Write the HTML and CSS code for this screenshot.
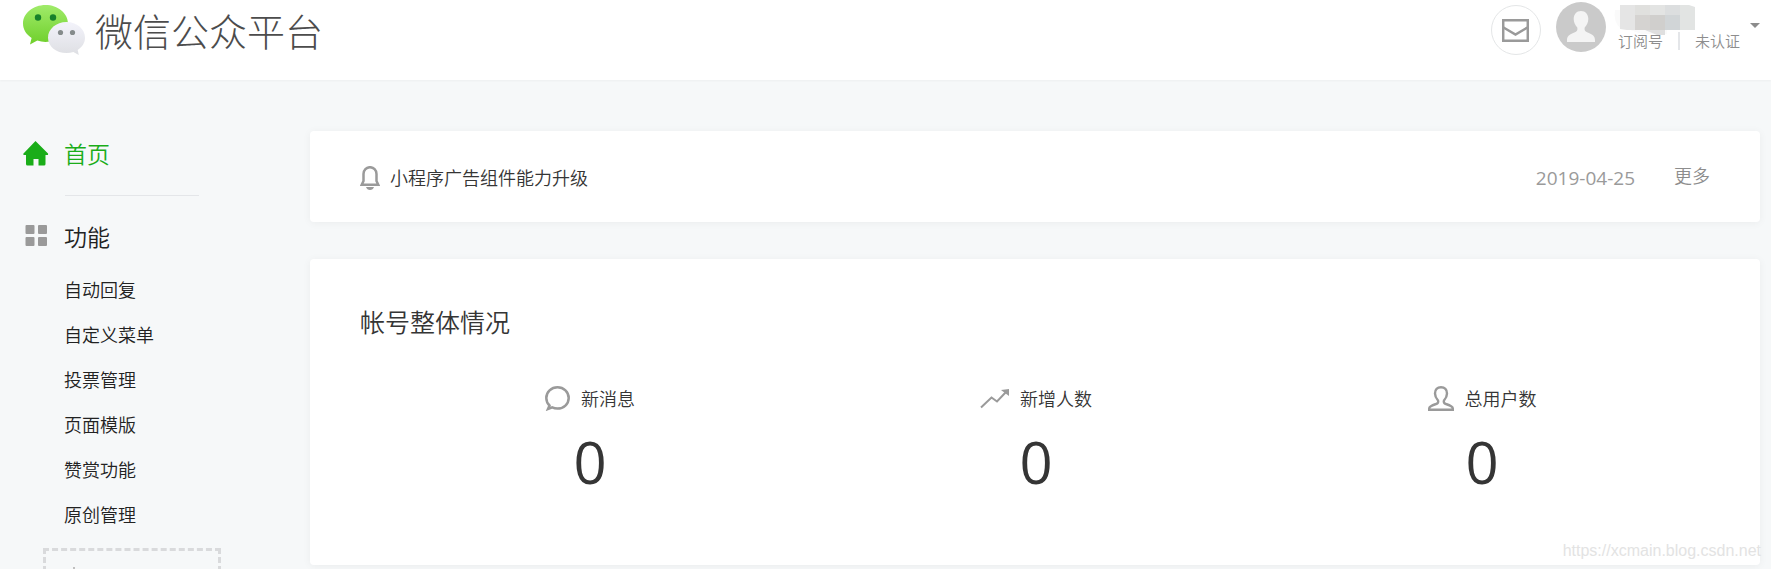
FILE: index.html
```html
<!DOCTYPE html>
<html lang="zh-CN">
<head>
    <meta charset="UTF-8">
    <meta name="viewport" content="width=device-width, initial-scale=1.0">
    <title>微信公众平台</title>
    <link rel="stylesheet" href="styles.css">
</head>
<body>
    <header class="header">
        <a class="logo" href="#">
            <svg class="logo-icon" width="62" height="50" viewBox="0 0 62 50">
                <defs>
                    <linearGradient id="green" x1="0" y1="0" x2="0" y2="1">
                        <stop offset="0" stop-color="#a0eb6a"/>
                        <stop offset="1" stop-color="#6fcf2b"/>
                    </linearGradient>
                    <linearGradient id="silver" x1="0" y1="0" x2="0" y2="1">
                        <stop offset="0" stop-color="#f3f3fb"/>
                        <stop offset="1" stop-color="#dedfe3"/>
                    </linearGradient>
                </defs>
                <path fill="url(#green)" d="M22.500 0C10 0 0 8.300 0 18.600c0 6 3.300 10.900 8.600 14.400L7 39.500l7.300-3.900c2.600.9 5.300 1.400 8.200 1.400 12.500 0 22.500-8 22.500-18.400S35 0 22.500 0z"/>
                <path fill="url(#silver)" d="M43.500 17C33.300 17 25 24 25 32.700s8.300 15.300 18.500 15.300c2.400 0 4.800-.3 6.900-1l5.400 3-1.100-5c4.400-3 7.300-7.200 7.300-12.300C62 24 53.700 17 43.500 17z"/>
                <circle cx="15" cy="12.500" r="3.200" fill="#17812b"/>
                <circle cx="30" cy="12.500" r="3.200" fill="#17812b"/>
                <circle cx="37.500" cy="27.500" r="2.600" fill="#858b8b"/>
                <circle cx="49.500" cy="27.500" r="2.600" fill="#858b8b"/>
            </svg>
            <span class="logo-text">微信公众平台</span>
        </a>
        <div class="account">
            <button class="mail" type="button" aria-label="通知">
                <svg width="27" height="23" viewBox="0 0 27 23" fill="none" stroke="#9a9a9a" stroke-width="2.500">
                    <path d="M1.200 1.200h24.600v20.600H1.200z"/>
                    <path d="M1.500 8.500L13.500 15.500L25.500 8.500"/>
                </svg>
            </button>
            <svg class="avatar" width="50" height="50" viewBox="0 0 50 50">
                <circle cx="25" cy="25" r="25" fill="#cacaca"/>
                <path fill="#f4f4f4" d="M25 9c-4.500 0-7.300 3.500-7.300 8 0 3.600 1.600 6.500 3.600 8.400.6 2.600-.4 4-3 5.200C13.500 32.500 11 34.500 11 38v2h28v-2c0-3.500-2.500-5.500-7.300-7.400-2.600-1.200-3.600-2.600-3-5.200 2-1.900 3.600-4.800 3.600-8.400 0-4.500-2.800-8-7.300-8z"/>
            </svg>
            <div class="account-info">
                <svg class="account-name" width="85" height="30" viewBox="-2 0 85 30">
                    <path fill="#fafafa" d="M2 5Q0 16 7 23l10 2 12 4h25V5z"/>
                    <path fill="#e5e5e5" d="M7 0h15v25H14l-7-1z"/>
                    <path fill="#e0e0de" d="M22 0h15v10H22z"/>
                    <path fill="#e3e4e3" d="M37 0h15v10H37z"/>
                    <path fill="#dcdedf" d="M52 0h15v10H52z"/>
                    <path fill="#e2e4e3" d="M67 0h9l6 2v23H67z"/>
                    <path fill="#d5d3d1" d="M22 10h15v15H22z"/>
                    <path fill="#d0cfcd" d="M37 10h15v15H37z"/>
                    <path fill="#d1d5d7" d="M52 10h15v15H52z"/>
                    <path fill="#dfdfdf" d="M32 25h20v5h-8z"/>
                </svg>
                <div class="account-type">
                    <span>订阅号</span>
                    <span class="divider"></span>
                    <span>未认证</span>
                </div>
            </div>
            <span class="arrow"></span>
        </div>
    </header>

    <div class="container">
        <nav class="sidebar">
            <a class="menu-title active" href="#">
                <svg width="26" height="26" viewBox="0 0 26 26">
                    <path fill="#1aad19" d="M12.500 0L25 12.500Q25.500 14 24 14h-1.500v9q0 1.500-1.500 1.500h-5.500V18h-5v6.500H4.500q-1.500 0-1.500-1.500v-9H1.500q-2 0-1-1.500z"/>
                </svg>
                首页
            </a>
            <hr class="menu-line">
            <a class="menu-title" href="#">
                <svg width="26" height="26" viewBox="0 0 26 26" fill="#9a9a9a">
                    <rect x="2.500" y="1" width="9" height="9" rx="1"/>
                    <rect x="15" y="1" width="9" height="9" rx="1"/>
                    <rect x="2.500" y="13" width="9" height="9" rx="1"/>
                    <rect x="15" y="13" width="9" height="9" rx="1"/>
                </svg>
                功能
            </a>
            <ul class="menu-list">
                <li><a href="#">自动回复</a></li>
                <li><a href="#">自定义菜单</a></li>
                <li><a href="#">投票管理</a></li>
                <li><a href="#">页面模版</a></li>
                <li><a href="#">赞赏功能</a></li>
                <li><a href="#">原创管理</a></li>
            </ul>
            <button class="add-plugin" type="button" aria-label="添加功能插件">
                <svg width="18" height="18" viewBox="0 0 18 18" stroke="#c0c0c0" stroke-width="2">
                    <path d="M9 0v18M0 9h18"/>
                </svg>
            </button>
        </nav>

        <main class="main">
            <section class="card news">
                <svg class="bell" width="20" height="24" viewBox="0 0 20 24">
                    <path fill="none" stroke="#9a9a9a" stroke-width="2.500" d="M3.500 15V8a6.500 6.800 0 0 1 13 0v7l1.800 3.800H1.700z"/>
                    <path fill="#9a9a9a" d="M6 21h8q-1 3-4 3t-4-3z"/>
                </svg>
                <a class="news-title" href="#">小程序广告组件能力升级</a>
                <span class="news-date">2019-04-25</span>
                <a class="news-more" href="#">更多</a>
            </section>

            <section class="card overview">
                <h2>帐号整体情况</h2>
                <div class="stats">
                    <div class="stat">
                        <div class="stat-label">
                            <svg width="25" height="25" viewBox="0 0 25 25" fill="none" stroke="#9a9a9a" stroke-width="2.500">
                                <path d="M4.500 19.500C2.500 17.500 1.300 14.800 1.300 12 1.300 6 6.300 1.300 12.500 1.300S23.700 6 23.700 12s-5 10.600-11.200 10.600c-2 0-3.700-.4-5.300-1.200L3 23z"/>
                            </svg>
                            <span>新消息</span>
                        </div>
                        <div class="stat-num">0</div>
                    </div>
                    <div class="stat">
                        <div class="stat-label">
                            <svg width="29" height="25" viewBox="0 0 29 25">
                                <path fill="none" stroke="#9a9a9a" stroke-width="2" d="M1 21.500L11.500 11.500L17 15.500L26 6"/>
                                <path fill="#9a9a9a" d="M21 4l8-1v7z"/>
                            </svg>
                            <span>新增人数</span>
                        </div>
                        <div class="stat-num">0</div>
                    </div>
                    <div class="stat">
                        <div class="stat-label">
                            <svg width="26" height="25" viewBox="0 0 26 25" fill="none" stroke="#9a9a9a" stroke-width="2.400">
                                <path d="M13 1.200C9.300 1.200 7 3.700 7 7.500c0 3.200 1.500 5.300 3 7 .6 1.600 0 2.800-2 3.500-4 1.300-6.800 2.300-6.800 4.500v1.300h23.600v-1.300c0-2.200-2.800-3.200-6.800-4.500-2-.7-2.600-1.900-2-3.500 1.500-1.700 3-3.800 3-7 0-3.800-2.300-6.300-6-6.300z"/>
                            </svg>
                            <span>总用户数</span>
                        </div>
                        <div class="stat-num">0</div>
                    </div>
                </div>
            </section>
        </main>
    </div>

    <div class="watermark">https://xcmain.blog.csdn.net</div>
</body>
</html>
```

FILE: styles.css
```css
* {
    box-sizing: border-box;
}

body {
    margin: 0;
    height: 100vh;
    overflow: hidden;
    position: relative;
    background-color: #f6f8f9;
    color: #353535;
    font-family: "Open Sans", "Noto Sans CJK SC", sans-serif;
    font-size: 18px;
    font-weight: 350;
    line-height: 24px;
}

a {
    color: inherit;
    text-decoration: none;
}

button {
    padding: 0;
    background: none;
    cursor: pointer;
}

svg {
    display: block;
    flex-shrink: 0;
}

.header {
    display: flex;
    justify-content: space-between;
    align-items: flex-start;
    height: 80px;
    padding: 0 11px 0 23px;
    background-color: #fff;
    box-shadow: 0 1px 2px rgba(0, 0, 0, 0.04);
}

.logo {
    display: flex;
    align-items: flex-start;
    gap: 10px;
    padding-top: 5px;
}

.logo-text {
    font-size: 38px;
    font-weight: 300;
    line-height: 52px;
    color: #4c4c4c;
}

.account {
    display: flex;
    align-items: flex-start;
    color: #8d8d8d;
}

.mail {
    display: flex;
    justify-content: center;
    align-items: center;
    width: 50px;
    height: 50px;
    margin-top: 5px;
    border: 1px solid #e4e6e7;
    border-radius: 50%;
}

.avatar {
    margin: 2px 5px 0 15px;
}

.account-info {
    padding-top: 5px;
}

.account-type {
    display: flex;
    align-items: center;
    gap: 15px;
    margin-top: -4px;
    padding-left: 7px;
    font-size: 15px;
    line-height: 20px;
}

.divider {
    width: 2px;
    height: 18px;
    background-color: #e4e6e9;
}

.arrow {
    margin: 23px 0 0 10px;
    border: 5px solid transparent;
    border-top-color: #8c8c8c;
    border-bottom: 0;
}

.container {
    display: flex;
    gap: 89px;
    padding: 51px 11px 0 23px;
}

.sidebar {
    width: 198px;
    flex-shrink: 0;
}

.menu-title {
    display: flex;
    align-items: center;
    gap: 15px;
    height: 46px;
    font-size: 23px;
    color: #222;
}

.menu-title.active {
    color: #1aad19;
}

.menu-line {
    width: 134px;
    margin: 18px 0 18px 42px;
    border: 0;
    border-top: 1px solid #e4e6e9;
}

.menu-list {
    margin: 8px 0 10px;
    padding: 0 0 0 41px;
    list-style: none;
    color: #222;
}

.menu-list li {
    line-height: 45px;
}

.add-plugin {
    display: flex;
    width: 178px;
    height: 60px;
    margin-left: 20px;
    padding: 16px 0 0 19px;
    border: 3px dashed #d9dadc;
}

.main {
    flex: 1;
}

.card {
    background-color: #fff;
    border-radius: 4px;
    box-shadow: 0 1px 8px rgba(0, 0, 0, 0.05);
}

.news {
    display: flex;
    align-items: center;
    margin-bottom: 37px;
    padding: 33px 50px 30px;
}

.news-title {
    flex: 1;
    padding-left: 10px;
}

.news-date {
    margin-right: 39px;
    font-size: 19px;
    font-weight: 400;
    color: #9a9a9a;
}

.news-more {
    padding-bottom: 4px;
    color: #8d8d8d;
}

.overview {
    height: 306px;
    padding: 45px 50px;
}

.overview h2 {
    margin: 0;
    font-size: 25px;
    font-weight: 350;
    line-height: 36px;
}

.stats {
    display: flex;
    padding: 46px 5px 0 7px;
}

.stat {
    flex: 1;
    text-align: center;
}

.stat-label {
    display: flex;
    justify-content: center;
    align-items: center;
    gap: 11px;
}

.stat-num {
    margin-top: 15px;
    font-size: 58px;
    font-weight: 400;
    line-height: 72px;
}

.watermark {
    position: absolute;
    right: 10px;
    bottom: 8px;
    font-family: "Liberation Sans", Arial, sans-serif;
    font-size: 16px;
    font-weight: 400;
    line-height: 20px;
    color: #e3e3e3;
}
```
